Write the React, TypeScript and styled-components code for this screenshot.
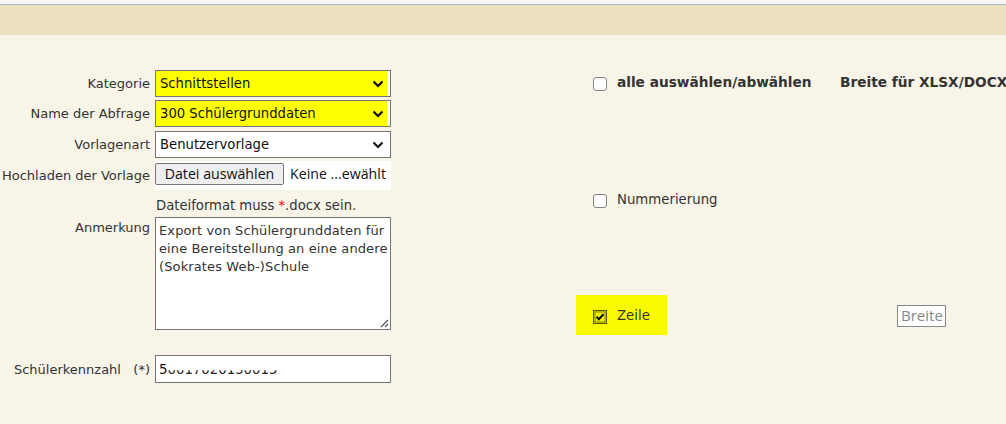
import React from "react";
import styled, { createGlobalStyle } from "styled-components";

const Global = createGlobalStyle`
  html, body { margin: 0; padding: 0; }
  body {
    background: #f8f5e8;
    font-family: "DejaVu Sans", Verdana, sans-serif;
    font-size: 13px;
    color: #333;
    width: 1006px;
    height: 424px;
    overflow: hidden;
  }
`;

const TopStrip = styled.div`
  height: 4px;
  background: #f6f6f6;
  border-bottom: 1px solid #aeb4c8;
`;

const Band = styled.div`
  height: 30px;
  background: #ebe0bd;
`;

const Main = styled.div`
  display: flex;
  padding-top: 35px;
`;

const Form = styled.div`
  width: 576px;
  flex: none;
  display: grid;
  grid-template-columns: 150px 236px;
  column-gap: 5px;
  align-content: start;
`;

const Label = styled.div<{ $top?: boolean; $mt?: number }>`
  text-align: right;
  white-space: pre;
  align-self: ${(p) => (p.$top ? "start" : "center")};
  padding-top: ${(p) => (p.$top ? "3px" : "0")};
  margin-top: ${(p) => p.$mt ?? 0}px;
  color: #333;
`;

const Cell = styled.div<{ $mt?: number }>`
  margin-top: ${(p) => p.$mt ?? 0}px;
`;

const SelectBox = styled.div<{ $hl?: boolean }>`
  box-sizing: border-box;
  height: 27px;
  border: 1px solid #767676;
  background: ${(p) =>
    p.$hl
      ? "linear-gradient(to right, #ffff00 0, #ffff00 calc(100% - 3px), #fffef0 calc(100% - 3px))"
      : "#fff"};
  display: flex;
  align-items: center;
  justify-content: space-between;
  padding: 0 6px 0 4px;
  color: #111;
  font-size: 13.2px;
`;

const Chevron = () => (
  <svg width="12" height="8" viewBox="0 0 12 8">
    <path d="M1.5 1.5 L6 6 L10.5 1.5" fill="none" stroke="#000" strokeWidth="2" />
  </svg>
);

const FileRow = styled.div`
  box-sizing: border-box;
  height: 29px;
  background: #fff;
  display: flex;
  align-items: flex-start;
  padding-top: 2px;
  gap: 6px;
  font-family: "Open Sans", "Noto Sans", sans-serif;
  font-size: 14.2px;
  color: #111;
`;

const FileButton = styled.button`
  box-sizing: border-box;
  width: 129px;
  height: 22px;
  background: #efefef;
  border: 1px solid #767676;
  border-radius: 2px;
  font: inherit;
  color: #111;
  padding: 0;
  line-height: 18px;
`;

const FileText = styled.span`
  line-height: 22px;
`;

const Hint = styled.div`
  padding: 7px 0 3px 1px;
  font-size: 13.2px;
  line-height: 17px;
  color: #333;
`;

const Red = styled.span`
  color: #e00;
`;

const TextArea = styled.div`
  position: relative;
  box-sizing: border-box;
  height: 113px;
  border: 1px solid #767676;
  background: #fff;
  padding: 4px 1px 3px 3px;
  font-size: 13px;
  letter-spacing: 0.12px;
  line-height: 18px;
  color: #333;
`;

const Grip = styled.svg`
  position: absolute;
  right: 1px;
  bottom: 1px;
`;

const TextInput = styled.div`
  box-sizing: border-box;
  height: 28px;
  border: 1px solid #767676;
  background: #fff;
  display: flex;
  align-items: center;
  padding: 0 3px;
  color: #111;
  font-size: 13.3px;
  white-space: nowrap;
`;

const Clipped = styled.span`
  clip-path: inset(58% 0 0 0);
  color: #222;
`;

const Right = styled.div`
  flex: 1;
  display: flex;
  flex-direction: column;
`;

const CheckRow = styled.div<{ $mt: number }>`
  display: grid;
  grid-template-columns: 264px 1fr;
  align-items: center;
  margin-top: ${(p) => p.$mt}px;
`;

const CheckItem = styled.div<{ $hl?: boolean }>`
  display: flex;
  align-items: center;
  gap: 10px;
  padding-left: 17px;
  height: ${(p) => (p.$hl ? "40px" : "auto")};
  width: ${(p) => (p.$hl ? "91px" : "auto")};
  box-sizing: border-box;
  background: ${(p) => (p.$hl ? "#f9f900" : "transparent")};
  justify-self: start;
`;

const Box = styled.span`
  box-sizing: border-box;
  width: 14px;
  height: 14px;
  border: 1px solid #858585;
  border-radius: 3px;
  background: #fff;
  margin-top: 4px;
`;

const CheckText = styled.span<{ $bold?: boolean }>`
  font-weight: ${(p) => (p.$bold ? 700 : 400)};
  font-size: ${(p) => (p.$bold ? "13.7px" : "13.3px")};
  color: #333;
  white-space: nowrap;
`;

const Heading = styled.span`
  font-weight: 700;
  font-size: 13.7px;
  color: #333;
  white-space: nowrap;
`;

const WidthButton = styled.span`
  justify-self: start;
  margin-left: 57px;
  margin-top: 2px;
  box-sizing: border-box;
  height: 22px;
  padding: 0 2px 0 3px;
  border: 1px solid #888;
  background: #fff;
  color: #888;
  font-family: "Open Sans", "Noto Sans", sans-serif;
  font-size: 15px;
  line-height: 19px;
`;

const OldCheck = () => (
  <svg width="14" height="14" viewBox="0 0 14 14" style={{ marginTop: 4 }}>
    <rect x="0.5" y="0.5" width="13" height="13" fill="#d8d800" stroke="#5e5e00" />
    <rect x="2" y="2" width="10" height="10" fill="#f3f300" stroke="#8a8a00" strokeWidth="1" />
    <path d="M3.5 6.8 L5.8 9.2 L10.5 4.2" fill="none" stroke="#000" strokeWidth="2" />
  </svg>
);

export default function App() {
  return (
    <>
      <Global />
      <TopStrip />
      <Band />
      <Main>
        <Form>
          <Label>Kategorie</Label>
          <Cell>
            <SelectBox $hl>
              <span>Schnittstellen</span>
              <Chevron />
            </SelectBox>
          </Cell>
          <Label $mt={3}>Name der Abfrage</Label>
          <Cell $mt={3}>
            <SelectBox $hl>
              <span>300 Schülergrunddaten</span>
              <Chevron />
            </SelectBox>
          </Cell>
          <Label $mt={4}>Vorlagenart</Label>
          <Cell $mt={4}>
            <SelectBox>
              <span>Benutzervorlage</span>
              <Chevron />
            </SelectBox>
          </Cell>
          <Label $mt={3}>Hochladen der Vorlage</Label>
          <Cell $mt={3}>
            <FileRow>
              <FileButton>Datei auswählen</FileButton>
              <FileText>Keine ...ewählt</FileText>
            </FileRow>
          </Cell>
          <div />
          <Hint>
            Dateiformat muss <Red>*</Red>.docx sein.
          </Hint>
          <Label $top>Anmerkung</Label>
          <Cell>
            <TextArea>
              Export von Schülergrunddaten für eine Bereitstellung an eine andere (Sokrates Web-)Schule
              <Grip width="10" height="10" viewBox="0 0 10 10">
                <path d="M9 2 L2 9 M9 6 L6 9" stroke="#555" strokeWidth="1.2" />
              </Grip>
            </TextArea>
          </Cell>
          <Label $mt={25}>{"Schülerkennzahl   (*)"}</Label>
          <Cell $mt={25}>
            <TextInput>
              5<Clipped>0017020150015</Clipped>
            </TextInput>
          </Cell>
        </Form>
        <Right>
          <CheckRow $mt={3}>
            <CheckItem>
              <Box />
              <CheckText $bold>alle auswählen/abwählen</CheckText>
            </CheckItem>
            <Heading>Breite für XLSX/DOCX</Heading>
          </CheckRow>
          <CheckRow $mt={99}>
            <CheckItem>
              <Box />
              <CheckText>Nummerierung</CheckText>
            </CheckItem>
          </CheckRow>
          <CheckRow $mt={87}>
            <CheckItem $hl>
              <OldCheck />
              <CheckText>Zeile</CheckText>
            </CheckItem>
            <WidthButton>Breite</WidthButton>
          </CheckRow>
        </Right>
      </Main>
    </>
  );
}
